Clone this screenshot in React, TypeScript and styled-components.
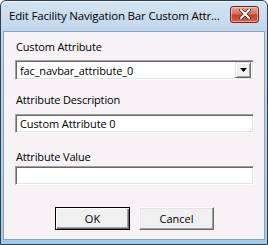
import styled, { createGlobalStyle } from "styled-components";

const GlobalStyle = createGlobalStyle`
  html, body {
    margin: 0;
    padding: 0;
    background: #ffffff;
  }
  body {
    font-family: "Liberation Sans", Arial, sans-serif;
  }
`;

const Window = styled.div`
  box-sizing: border-box;
  width: 268px;
  height: 245px;
  display: flex;
  flex-direction: column;
  border: 1px solid #2f3f52;
  border-radius: 6px 6px 0 0;
  background: linear-gradient(to bottom, #d6e4f2 0px, #c3d7ec 28px, #9fcbec 100%);
  padding: 0 2px 4px 2px;
  box-shadow: inset 0 1px 0 #eef4fb;
`;

const TitleBar = styled.div`
  height: 28px;
  display: flex;
  align-items: center;
  justify-content: space-between;
  padding: 0 6px 2px 6px;
  flex-shrink: 0;
`;

const Title = styled.span`
  font-family: "Open Sans", "Noto Sans", sans-serif;
  font-size: 11.5px;
  letter-spacing: -0.18px;
  color: #000000;
  white-space: nowrap;
`;

const CloseButton = styled.button`
  width: 29px;
  height: 17px;
  margin-top: -2px;
  padding: 0;
  display: flex;
  align-items: center;
  justify-content: center;
  border: 1px solid #6d2a22;
  border-radius: 3px;
  background: linear-gradient(to bottom, #e8a497 0%, #d9705f 45%, #c4402b 55%, #d0654f 100%);
  box-shadow: inset 0 0 0 1px rgba(255, 220, 210, 0.55);
`;

const Client = styled.div`
  flex: 1;
  display: flex;
  flex-direction: column;
  border: 1px solid #8aa3bd;
  background: #f6f2f6;
  padding: 0 10px 0 11px;
  font-family: "Liberation Sans", Arial, sans-serif;
  font-size: 12px;
  color: #000000;
`;

const Label = styled.div<{ $top: number }>`
  margin-top: ${({ $top }) => $top}px;
  height: 14px;
  line-height: 14px;
  padding-left: 1px;
  font-family: "Open Sans", "Noto Sans", sans-serif;
  font-size: 11px;
  letter-spacing: -0.15px;
`;

const sunken = `
  box-sizing: border-box;
  border-top: 1px solid #a0a0a0;
  border-left: 1px solid #a0a0a0;
  border-right: 1px solid #ffffff;
  border-bottom: 1px solid #ffffff;
  box-shadow: inset 1px 1px 0 #696969, inset -1px -1px 0 #e3e3e3;
`;

const Combo = styled.div<{ $top: number }>`
  ${sunken}
  margin-top: ${({ $top }) => $top}px;
  height: 20px;
  background: #ffffff;
  display: flex;
  align-items: center;
  padding: 2px 2px 2px 3px;
`;

const ComboText = styled.span`
  flex: 1;
  font-family: "Open Sans", "Noto Sans", sans-serif;
  font-size: 11px;
  letter-spacing: -0.15px;
  padding-left: 1px;
`;

const ComboArrow = styled.div`
  box-sizing: border-box;
  width: 16px;
  height: 16px;
  background: #f0f0f0;
  border-top: 1px solid #e3e3e3;
  border-left: 1px solid #e3e3e3;
  border-right: 1px solid #696969;
  border-bottom: 1px solid #696969;
  box-shadow: inset 1px 1px 0 #ffffff, inset -1px -1px 0 #a0a0a0;
  display: flex;
  align-items: center;
  justify-content: center;
`;

const TextBox = styled.div<{ $top: number }>`
  ${sunken}
  margin-top: ${({ $top }) => $top}px;
  height: 19px;
  background: #ffffff;
  display: flex;
  align-items: center;
  padding: 0 4px;
  font-family: "Open Sans", "Noto Sans", sans-serif;
  font-size: 11px;
  letter-spacing: -0.1px;
`;

const ButtonRow = styled.div`
  margin-top: 22px;
  display: flex;
  gap: 9px;
  padding-left: 40px;
`;

const DialogButton = styled.button<{ $default?: boolean }>`
  box-sizing: border-box;
  width: 75px;
  height: 23px;
  padding: 0;
  background: #f0f0f0;
  font-family: "Open Sans", "Noto Sans", sans-serif;
  font-size: 11px;
  color: #000000;
  border-top: 1px solid ${({ $default }) => ($default ? "#000000" : "#ffffff")};
  border-left: 1px solid ${({ $default }) => ($default ? "#000000" : "#ffffff")};
  border-right: 1px solid ${({ $default }) => ($default ? "#000000" : "#696969")};
  border-bottom: 1px solid ${({ $default }) => ($default ? "#000000" : "#696969")};
  box-shadow: ${({ $default }) =>
    $default
      ? "inset 1px 1px 0 #ffffff, inset -1px -1px 0 #696969, inset -2px -2px 0 #a0a0a0"
      : "inset -1px -1px 0 #a0a0a0, inset 1px 1px 0 #e3e3e3"};
`;

export default function App() {
  return (
    <>
      <GlobalStyle />
      <Window>
        <TitleBar>
          <Title>Edit Facility Navigation Bar Custom Attr...</Title>
          <CloseButton aria-label="Close">
            <svg width="12" height="10" viewBox="0 0 12 10">
              <path d="M2 1 L10 9 M10 1 L2 9" stroke="#5a2018" strokeWidth="3.4" strokeLinecap="square" />
              <path d="M2 1 L10 9 M10 1 L2 9" stroke="#ffffff" strokeWidth="2" strokeLinecap="square" />
            </svg>
          </CloseButton>
        </TitleBar>
        <Client>
          <Label $top={8}>Custom Attribute</Label>
          <Combo $top={6}>
            <ComboText>fac_navbar_attribute_0</ComboText>
            <ComboArrow>
              <svg width="7" height="4" viewBox="0 0 7 4">
                <path d="M0 0 H7 L3.5 4 Z" fill="#000000" />
              </svg>
            </ComboArrow>
          </Combo>
          <Label $top={13}>Attribute Description</Label>
          <TextBox $top={7}>Custom Attribute 0</TextBox>
          <Label $top={17}>Attribute Value</Label>
          <TextBox $top={2}></TextBox>
          <ButtonRow>
            <DialogButton $default>OK</DialogButton>
            <DialogButton>Cancel</DialogButton>
          </ButtonRow>
        </Client>
      </Window>
    </>
  );
}
